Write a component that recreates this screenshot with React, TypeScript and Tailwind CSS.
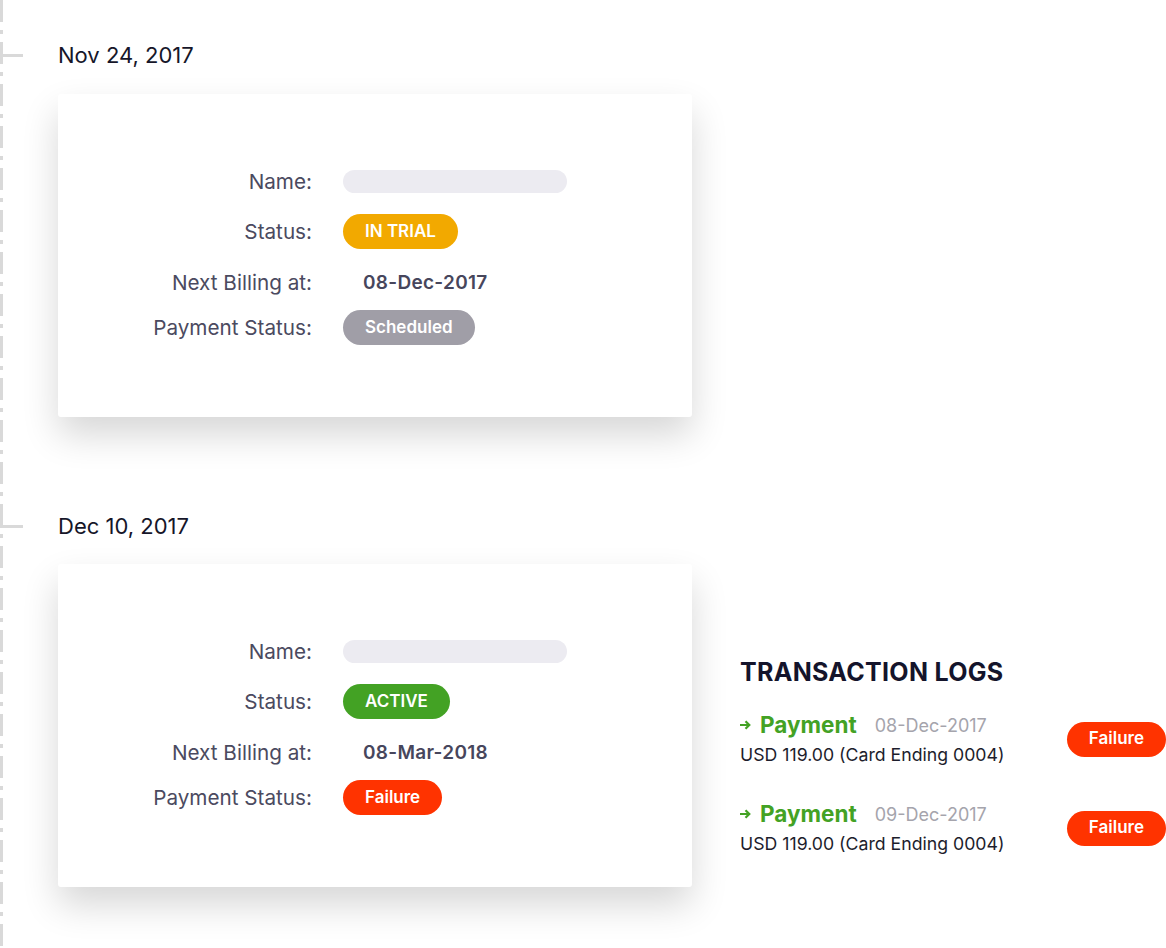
import React from "react";

type Pill = { text: string; color: string };

const font = { fontFamily: "Inter, 'Noto Sans', sans-serif" };

const TimelineLine = () => (
  <div className="w-[3px] shrink-0">
    <svg width="3" height="948" className="block">
      <line x1="1.5" y1="0" x2="1.5" y2="948" stroke="#d9d9d9" strokeWidth="3" strokeDasharray="22 8 4 8" />
    </svg>
  </div>
);

const StatusPill = ({ text, color }: Pill) => (
  <span
    className={`inline-flex h-[35px] items-center rounded-full px-[22px] text-[17px] font-semibold text-white ${color}`}
  >
    {text}
  </span>
);

const Row = ({ label, children, className }: { label: string; children: React.ReactNode; className?: string }) => (
  <div className={`flex items-center ${className ?? ""}`}>
    <div className="w-[254px] text-right text-[20.7px] text-[#4b4a60]">{label}</div>
    <div className="ml-[31px] flex items-center">{children}</div>
  </div>
);

const SubscriptionCard = ({
  status,
  billing,
  payment,
}: {
  status: Pill;
  billing: string;
  payment: Pill;
}) => (
  <div className="h-[323px] w-[634px] shrink-0 rounded-[3px] bg-white pt-[76px] shadow-[0_18px_36px_rgba(0,0,0,0.16)]">
    <Row label="Name:" className="h-[23px]">
      <div className="h-[23px] w-[224px] rounded-full bg-[#ecebf1]" />
    </Row>
    <Row label="Status:" className="mt-[21px] h-[35px]">
      <StatusPill {...status} />
    </Row>
    <Row label="Next Billing at:" className="mt-[22px] h-[24px]">
      <span className="pl-5 text-[19px] font-semibold tracking-[0.3px] text-[#47465c]">{billing}</span>
    </Row>
    <Row label="Payment Status:" className="mt-[15px] h-[35px]">
      <StatusPill {...payment} />
    </Row>
  </div>
);

const logs = [
  { date: "08-Dec-2017", amount: "USD 119.00 (Card Ending 0004)" },
  { date: "09-Dec-2017", amount: "USD 119.00 (Card Ending 0004)" },
];

const TransactionLogs = () => (
  <div className="ml-[48px] w-[426px] pt-[93px]">
    <h2 className="text-[25px] font-bold leading-[30px] tracking-[0.3px] text-[#14142b]">TRANSACTION LOGS</h2>
    <div className="mt-[24px] flex flex-col gap-[33px]">
      {logs.map((log) => (
        <div key={log.date} className="flex items-center justify-between">
          <div>
            <div className="flex items-center">
              <svg width="12" height="10" viewBox="0 0 12 10" className="mr-[8px]">
                <path d="M0 5h9M5.5 1.2 9.3 5 5.5 8.8" fill="none" stroke="#43a224" strokeWidth="2.2" />
              </svg>
              <span className="text-[22.5px] font-bold leading-[28px] text-[#43a224]">Payment</span>
              <span className="ml-[18px] text-[18px] text-[#a5a4ac]">{log.date}</span>
            </div>
            <div className="mt-[4px] text-[17.7px] leading-[24px] text-[#1d1d2c]">{log.amount}</div>
          </div>
          <StatusPill text="Failure" color="bg-[#ff3300]" />
        </div>
      ))}
    </div>
  </div>
);

const DateRow = ({ date }: { date: string }) => (
  <div className="flex h-[30px] items-center">
    <div className="-ml-[59px] mr-[35px] h-[3px] w-[24px] bg-[#d9d9d9]" />
    <span className="text-[22px] leading-[30px] text-[#161629]">{date}</span>
  </div>
);

export default function App() {
  return (
    <div className="flex h-[948px] overflow-hidden bg-white" style={font}>
      <TimelineLine />
      <div className="flex-1 pl-[55px] pt-[40px]">
        <DateRow date="Nov 24, 2017" />
        <div className="mt-[24px] flex">
          <SubscriptionCard
            status={{ text: "IN TRIAL", color: "bg-[#f2a900]" }}
            billing="08-Dec-2017"
            payment={{ text: "Scheduled", color: "bg-[#a09ea7]" }}
          />
        </div>
        <div className="mt-[94px]">
          <DateRow date="Dec 10, 2017" />
        </div>
        <div className="mt-[23px] flex">
          <SubscriptionCard
            status={{ text: "ACTIVE", color: "bg-[#43a224]" }}
            billing="08-Mar-2018"
            payment={{ text: "Failure", color: "bg-[#ff3300]" }}
          />
          <TransactionLogs />
        </div>
      </div>
    </div>
  );
}
